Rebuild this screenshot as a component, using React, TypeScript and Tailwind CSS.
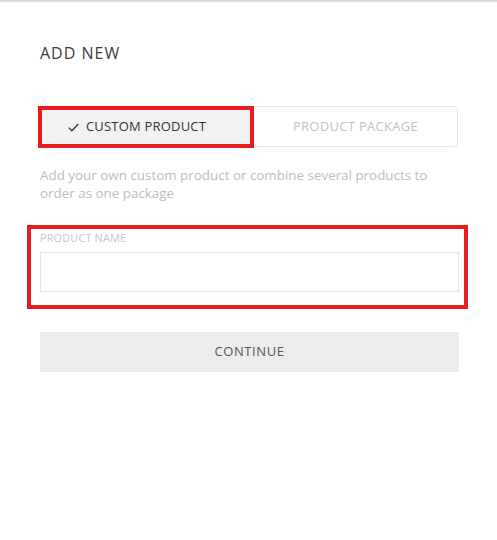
import { useState } from "react";

type Mode = "custom" | "package";

export default function App() {
  const [mode, setMode] = useState<Mode>("custom");
  const [name, setName] = useState("");

  return (
    <div
      className="min-h-[540px] w-full border-t-2 border-[#dadada] bg-white"
      style={{ fontFamily: '"Open Sans", "Liberation Sans", sans-serif' }}
    >
      <div className="px-10 pt-[39px]">
        <h2 className="text-[16px] leading-[24px] tracking-[1px] text-[#3c3c3c]">
          ADD NEW
        </h2>

        {/* mode switch */}
        <div className="mt-[41px] flex h-[41px] w-[418px] rounded-[4px] border border-[#e6e6e6]">
          <button
            onClick={() => setMode("custom")}
            className="-mt-px -ml-[3px] flex h-[42px] w-[216px] items-center justify-center gap-[7px] border-4 border-[#e81c1c] bg-[#f2f2f2] text-[13px] tracking-[0.2px] text-[#333]"
          >
            <svg className="-ml-[18px]" width="11" height="9" viewBox="0 0 11 9" fill="none">
              <path d="M0.8 4.6 3.9 7.7 10.3 1" stroke="#333" strokeWidth="1.3" />
            </svg>
            CUSTOM PRODUCT
          </button>
          <button
            onClick={() => setMode("package")}
            className={`flex flex-1 items-center justify-center text-[13px] tracking-[0.3px] ${
              mode === "package" ? "text-[#333]" : "text-[#c2c2c2]"
            }`}
          >
            PRODUCT PACKAGE
          </button>
        </div>

        <p className="mt-[19px] w-[410px] text-[13.4px] leading-[18px] text-[#bdbdbd]">
          Add your own custom product or combine several products to order as one
          package
        </p>

        {/* product name field */}
        <div className="relative mt-[28px]">
          <div className="pointer-events-none absolute -top-[5px] -left-[13px] -right-[11px] -bottom-[17px] border-4 border-[#e81c1c]" />
          <label className="block text-[11px] leading-[16px] tracking-[0.1px] text-[#c6c6c6]">
            PRODUCT NAME
          </label>
          <input
            value={name}
            onChange={(e) => setName(e.target.value)}
            className="mt-[6px] block h-[40px] w-[419px] border border-[#e2e2e2] px-3 text-[14px] text-[#333] outline-none"
          />
        </div>

        <button className="mt-[40px] flex h-[40px] w-[419px] items-center justify-center bg-[#ececec] text-[13px] tracking-[0.6px] text-[#555]">
          CONTINUE
        </button>
      </div>
    </div>
  );
}
